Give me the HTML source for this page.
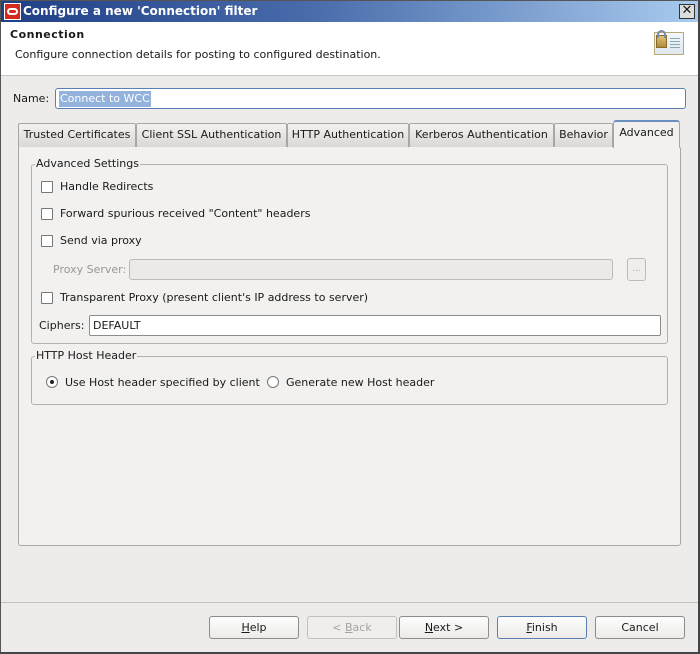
<!DOCTYPE html>
<html><head><style>
*{box-sizing:border-box;margin:0;padding:0}
body{width:700px;height:654px;overflow:hidden;font-family:"DejaVu Sans","Liberation Sans",sans-serif;font-size:11px;color:#1a1a1a;background:#edecea;position:relative}
.a{position:absolute;white-space:nowrap}
.win{left:0;top:0;width:700px;height:654px;border:1px solid #555;border-right:2px solid #444;border-bottom:2px solid #444}
.title{left:1px;top:1px;width:697px;height:21px;background:linear-gradient(90deg,#1f3f86 0%,#4a6cab 45%,#a8cbef 100%);color:#fff;font-weight:bold;font-size:12px;line-height:21px;padding-left:22px}
.hdr{left:1px;top:22px;width:697px;height:54px;background:#fff;border-bottom:1px solid #c8c6c2}
.tab{top:123px;height:24px;border:1px solid #a9a7a3;border-bottom:none;background:linear-gradient(#f3f2f0,#dad8d4);line-height:22px;text-align:center;border-radius:2px 2px 0 0}
.cb{width:12px;height:12px;border:1px solid #777;background:#fff;border-radius:1px}
.grp{border:1px solid #b4b2ae;border-radius:3px}
.lg{background:#f2f1f0;padding:0 1px}
.btn{top:616px;height:23px;width:90px;border:1px solid #8e8c88;border-radius:3px;background:linear-gradient(#fdfdfd,#ecebe9);text-align:center;line-height:21px}
.rad{width:12px;height:12px;border:1px solid #777;border-radius:50%;background:#fff}
</style></head><body>
<div class="a win"></div>
<div class="a title">Configure a new 'Connection' filter</div>
<div class="a" style="left:4px;top:3px;width:17px;height:17px;background:#d52b1e;border:1px solid #fff"><div style="position:absolute;left:2px;top:4px;width:11px;height:7px;border:2px solid #fff;border-radius:4px"></div></div>
<div class="a" style="left:679px;top:4px;width:16px;height:15px;background:#ddd;border:1px solid #333;font-size:13px;line-height:12px;text-align:center;font-weight:bold">✕</div>
<div class="a hdr"></div>
<div class="a" style="left:10px;top:28px;font-weight:bold;letter-spacing:0.5px">Connection</div>
<div class="a" style="left:15px;top:48px">Configure connection details for posting to configured destination.</div>
<div class="a" style="left:654px;top:32px;width:30px;height:23px;border:1px solid #b9a97a;background:linear-gradient(#f4f7fb,#dfe7ef)"></div>
<div class="a" style="left:656px;top:35px;width:11px;height:13px;background:linear-gradient(#e0c47a,#b08b3a);border:1px solid #8a6a2a"></div>
<div class="a" style="left:657px;top:30px;width:9px;height:8px;border:2px solid #7a8ca8;border-bottom:none;border-radius:5px 5px 0 0"></div>
<div class="a" style="left:670px;top:38px;width:10px;height:1px;background:#8aa;box-shadow:0 3px #8aa,0 6px #8aa,0 9px #8aa"></div>
<div class="a" style="left:13px;top:92px">Name:</div>
<div class="a" style="left:55px;top:88px;width:631px;height:21px;border:1px solid #5b7fb5;border-radius:3px;background:#fff"></div>
<div class="a" style="left:59px;top:91px;background:#93b3dc;color:#fff;padding:1px 1px;line-height:14px">Connect to WCC</div>
<div class="a" style="left:18px;top:146px;width:663px;height:400px;border:1px solid #a9a7a3;border-radius:0 3px 3px 3px;background:#f2f1f0"></div>
<div class="a tab" style="left:18px;width:118px">Trusted Certificates</div>
<div class="a tab" style="left:136px;width:151px">Client SSL Authentication</div>
<div class="a tab" style="left:287px;width:122px">HTTP Authentication</div>
<div class="a tab" style="left:409px;width:145px">Kerberos Authentication</div>
<div class="a tab" style="left:554px;width:59px">Behavior</div>
<div class="a" style="left:613px;top:120px;width:67px;height:28px;border:1px solid #a9a7a3;border-top:2px solid #6d8fc0;border-bottom:none;border-radius:3px 3px 0 0;background:#f2f1f0;text-align:center;line-height:22px">Advanced</div>
<div class="a grp" style="left:31px;top:164px;width:637px;height:180px"></div>
<div class="a lg" style="left:35px;top:157px">Advanced Settings</div>
<div class="a cb" style="left:41px;top:181px"></div><div class="a" style="left:60px;top:180px">Handle Redirects</div>
<div class="a cb" style="left:41px;top:208px"></div><div class="a" style="left:60px;top:207px">Forward spurious received "Content" headers</div>
<div class="a cb" style="left:41px;top:235px"></div><div class="a" style="left:60px;top:234px">Send via proxy</div>
<div class="a" style="left:53px;top:263px;color:#9a9894">Proxy Server:</div>
<div class="a" style="left:129px;top:259px;width:484px;height:21px;border:1px solid #bdbbb7;border-radius:3px;background:#ebeae8"></div>
<div class="a" style="left:627px;top:258px;width:19px;height:23px;border:1px solid #bdbbb7;border-radius:3px;background:#efeeec;color:#aaa;font-size:9px;text-align:center;line-height:21px">...</div>
<div class="a cb" style="left:41px;top:292px"></div><div class="a" style="left:60px;top:291px">Transparent Proxy (present client's IP address to server)</div>
<div class="a" style="left:39px;top:319px">Ciphers:</div>
<div class="a" style="left:89px;top:315px;width:572px;height:21px;border:1px solid #8e8c88;border-radius:2px;background:#fff;padding-left:3px;line-height:19px">DEFAULT</div>
<div class="a grp" style="left:31px;top:356px;width:637px;height:49px"></div>
<div class="a lg" style="left:35px;top:349px">HTTP Host Header</div>
<div class="a rad" style="left:46px;top:376px"><div style="position:absolute;left:3px;top:3px;width:4px;height:4px;border-radius:50%;background:#222"></div></div>
<div class="a" style="left:65px;top:376px">Use Host header specified by client</div>
<div class="a rad" style="left:267px;top:376px"></div>
<div class="a" style="left:286px;top:376px">Generate new Host header</div>
<div class="a" style="left:1px;top:602px;width:697px;height:1px;background:#c4c2be"></div>
<div class="a btn" style="left:209px"><u>H</u>elp</div>
<div class="a btn" style="left:307px;color:#a5a3a0;border-color:#c2c0bc;background:#efeeec">&lt; <u>B</u>ack</div>
<div class="a btn" style="left:399px"><u>N</u>ext &gt;</div>
<div class="a btn" style="left:497px;border-color:#5b7fb5"><u>F</u>inish</div>
<div class="a btn" style="left:595px">Cancel</div>
</body></html>
